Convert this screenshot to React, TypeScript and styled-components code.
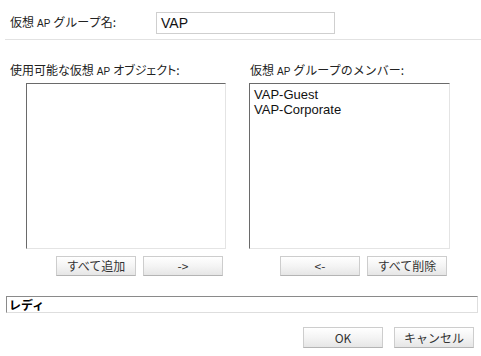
import styled, { createGlobalStyle } from 'styled-components';

const GlobalStyle = createGlobalStyle`
  body {
    margin: 0;
    background: #ffffff;
    font-family: "Noto Sans CJK JP", "Liberation Sans", sans-serif;
    color: #222;
  }
`;

const Page = styled.div`
  width: 481px;
  height: 356px;
  display: flex;
  flex-direction: column;
  font-size: 12px;
`;

const HeaderRow = styled.div`
  display: flex;
  align-items: center;
  height: 39px;
  padding-left: 10px;
  box-sizing: border-box;
  padding-top: 6px;
`;

const Label = styled.label<{ $width?: number; $tight?: boolean }>`
  display: block;
  width: ${(p) => (p.$width ? `${p.$width}px` : 'auto')};
  line-height: 15px;
  white-space: nowrap;
  color: #222;
  font-feature-settings: ${(p) => (p.$tight ? '"palt"' : 'normal')};
`;

const Small = styled.span`
  font-family: "Liberation Sans", sans-serif;
  font-size: 10px;
  margin: 0 3px;
`;

const NameInput = styled.div`
  width: 179px;
  height: 22px;
  box-sizing: border-box;
  border: 1px solid #cfcfcf;
  padding: 0 4px;
  display: flex;
  align-items: center;
  font-family: "Liberation Sans", sans-serif;
  font-size: 14px;
  color: #111;
`;

const Separator = styled.hr`
  margin: 0 0 0 5px;
  border: none;
  border-top: 1px solid #e2e2e2;
  height: 0;
`;

const Columns = styled.div`
  display: grid;
  grid-template-columns: 239px 1fr;
  padding-left: 10px;
  padding-top: 22px;
`;

const Column = styled.div<{ $listOffset: number; $buttonsOffset: number }>`
  display: flex;
  flex-direction: column;
  --list-offset: ${(p) => p.$listOffset}px;
  --buttons-offset: ${(p) => p.$buttonsOffset}px;
`;

const ColumnLabel = styled(Label)<{ $indent: number }>`
  padding-left: ${(p) => p.$indent}px;
  height: 21px;
`;

const ListBox = styled.div<{ $width: number }>`
  margin-left: var(--list-offset);
  width: ${(p) => p.$width}px;
  height: 166px;
  box-sizing: border-box;
  border-top: 1px solid #6a6a6a;
  border-left: 1px solid #6a6a6a;
  border-right: 1px solid #e4e4e4;
  border-bottom: 1px solid #e4e4e4;
  padding: 3px 4px;
  font-family: "Liberation Sans", sans-serif;
  font-size: 13px;
  line-height: 15px;
  color: #111;
`;

const ButtonRow = styled.div`
  display: flex;
  gap: 7px;
  margin-top: 7px;
  padding-left: var(--buttons-offset);
`;

const Button = styled.button`
  width: 80px;
  height: 20px;
  box-sizing: border-box;
  padding: 0;
  border: 1px solid #cdcdcd;
  border-bottom-color: #b4b4b4;
  background: linear-gradient(#ffffff, #f4f4f4 50%, #e6e6e6);
  font-family: "Noto Sans CJK JP", "Liberation Sans", sans-serif;
  font-size: 12px;
  line-height: 18px;
  color: #333;
`;

const StatusBar = styled.div`
  margin: 20px 3px 0 6px;
  height: 17px;
  box-sizing: border-box;
  border-top: 1px solid #8a8a8a;
  border-left: 1px solid #8a8a8a;
  border-right: 1px solid #dedede;
  border-bottom: 1px solid #dedede;
  padding-left: 2px;
  font-weight: bold;
  font-size: 12px;
  line-height: 15px;
  color: #000;
`;

const Footer = styled.div`
  display: flex;
  justify-content: flex-end;
  gap: 11px;
  padding-right: 7px;
  margin-top: 14px;
`;

const FooterButton = styled(Button)`
  height: 21px;
`;

export default function App() {
  return (
    <>
      <GlobalStyle />
      <Page>
        <HeaderRow>
          <Label $width={146}>
            仮想<Small>AP</Small>グループ名:
          </Label>
          <NameInput>VAP</NameInput>
        </HeaderRow>
        <Separator />
        <Columns>
          <Column $listOffset={16} $buttonsOffset={46}>
            <ColumnLabel $indent={0} $tight>
              使用可能な仮想<Small>AP</Small>オブジェクト:
            </ColumnLabel>
            <ListBox $width={200} />
            <ButtonRow>
              <Button>すべて追加</Button>
              <Button>-&gt;</Button>
            </ButtonRow>
          </Column>
          <Column $listOffset={0} $buttonsOffset={31}>
            <ColumnLabel $indent={1}>
              仮想<Small>AP</Small>グループのメンバー:
            </ColumnLabel>
            <ListBox $width={201}>
              <div>VAP-Guest</div>
              <div>VAP-Corporate</div>
            </ListBox>
            <ButtonRow>
              <Button>&lt;-</Button>
              <Button>すべて削除</Button>
            </ButtonRow>
          </Column>
        </Columns>
        <StatusBar>レディ</StatusBar>
        <Footer>
          <FooterButton>OK</FooterButton>
          <FooterButton>キャンセル</FooterButton>
        </Footer>
      </Page>
    </>
  );
}
